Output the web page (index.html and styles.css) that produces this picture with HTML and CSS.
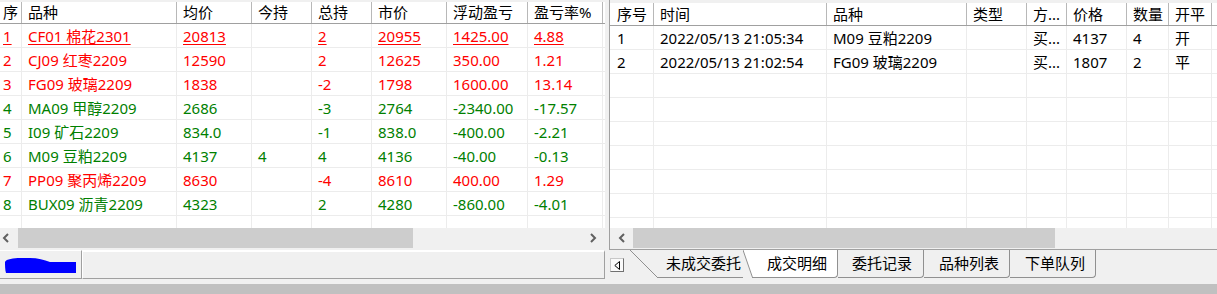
FILE: index.html
```html
<!DOCTYPE html>
<html lang="zh-CN">
<head>
<meta charset="utf-8">
<title>交易</title>
<link rel="stylesheet" href="styles.css">
</head>
<body>
<div class="main">
  <section class="left">
    <div class="grid-wrap left-grid">
      <div class="row head">
        <div class="cell idx">序</div><div class="cell">品种</div><div class="cell">均价</div><div class="cell">今持</div><div class="cell">总持</div><div class="cell">市价</div><div class="cell">浮动盈亏</div><div class="cell">盈亏率%</div>
      </div>
      <div class="row red ul">
        <div class="cell idx">1</div><div class="cell">CF01 棉花2301</div><div class="cell">20813</div><div class="cell"></div><div class="cell">2</div><div class="cell">20955</div><div class="cell">1425.00</div><div class="cell">4.88</div>
      </div>
      <div class="row red">
        <div class="cell idx">2</div><div class="cell">CJ09 红枣2209</div><div class="cell">12590</div><div class="cell"></div><div class="cell">2</div><div class="cell">12625</div><div class="cell">350.00</div><div class="cell">1.21</div>
      </div>
      <div class="row red">
        <div class="cell idx">3</div><div class="cell">FG09 玻璃2209</div><div class="cell">1838</div><div class="cell"></div><div class="cell">-2</div><div class="cell">1798</div><div class="cell">1600.00</div><div class="cell">13.14</div>
      </div>
      <div class="row green">
        <div class="cell idx">4</div><div class="cell">MA09 甲醇2209</div><div class="cell">2686</div><div class="cell"></div><div class="cell">-3</div><div class="cell">2764</div><div class="cell">-2340.00</div><div class="cell">-17.57</div>
      </div>
      <div class="row green">
        <div class="cell idx">5</div><div class="cell">I09 矿石2209</div><div class="cell">834.0</div><div class="cell"></div><div class="cell">-1</div><div class="cell">838.0</div><div class="cell">-400.00</div><div class="cell">-2.21</div>
      </div>
      <div class="row green">
        <div class="cell idx">6</div><div class="cell">M09 豆粕2209</div><div class="cell">4137</div><div class="cell">4</div><div class="cell">4</div><div class="cell">4136</div><div class="cell">-40.00</div><div class="cell">-0.13</div>
      </div>
      <div class="row red">
        <div class="cell idx">7</div><div class="cell">PP09 聚丙烯2209</div><div class="cell">8630</div><div class="cell"></div><div class="cell">-4</div><div class="cell">8610</div><div class="cell">400.00</div><div class="cell">1.29</div>
      </div>
      <div class="row green">
        <div class="cell idx">8</div><div class="cell">BUX09 沥青2209</div><div class="cell">4323</div><div class="cell"></div><div class="cell">2</div><div class="cell">4280</div><div class="cell">-860.00</div><div class="cell">-4.01</div>
      </div>
      <div class="row">
        <div class="cell idx"></div><div class="cell"></div><div class="cell"></div><div class="cell"></div><div class="cell"></div><div class="cell"></div><div class="cell"></div><div class="cell"></div>
      </div>
    </div>
    <div class="hscroll">
      <span class="sb-btn sb-left-a"><svg width="8" height="10" viewBox="0 0 8 10"><polyline points="6,1 2,5 6,9" fill="none" stroke="#606060" stroke-width="2"/></svg></span>
      <span class="thumb" style="width:395px"></span>
      <span class="track"></span>
      <span class="sb-btn sb-right-a"><svg width="8" height="10" viewBox="0 0 8 10"><polyline points="2,1 6,5 2,9" fill="none" stroke="#606060" stroke-width="2"/></svg></span>
    </div>
    <div class="status">
      <div class="st-box st-first">
        <svg class="blob" width="74" height="17" viewBox="0 0 74 17"><path d="M1,5 C2,2 10,1 16,1 L26,1 C34,1 40,3 46,5 L72,5 L72,16 L2,16 C1,13 1,8 1,5 Z" fill="#0000ff"/></svg>
      </div>
      <div class="st-box st-rest"></div>
    </div>
  </section>
  <div class="splitter"></div>
  <section class="right">
    <div class="frame">
      <div class="grid-wrap right-grid">
        <div class="row head">
          <div class="cell idx">序号</div><div class="cell">时间</div><div class="cell">品种</div><div class="cell">类型</div><div class="cell">方...</div><div class="cell">价格</div><div class="cell">数量</div><div class="cell">开平</div>
        </div>
        <div class="row">
          <div class="cell idx">1</div><div class="cell">2022/05/13 21:05:34</div><div class="cell">M09 豆粕2209</div><div class="cell"></div><div class="cell">买...</div><div class="cell">4137</div><div class="cell">4</div><div class="cell">开</div>
        </div>
        <div class="row">
          <div class="cell idx">2</div><div class="cell">2022/05/13 21:02:54</div><div class="cell">FG09 玻璃2209</div><div class="cell"></div><div class="cell">买...</div><div class="cell">1807</div><div class="cell">2</div><div class="cell">平</div>
        </div>
        <div class="row"><div class="cell idx"></div><div class="cell"></div><div class="cell"></div><div class="cell"></div><div class="cell"></div><div class="cell"></div><div class="cell"></div><div class="cell"></div></div>
        <div class="row"><div class="cell idx"></div><div class="cell"></div><div class="cell"></div><div class="cell"></div><div class="cell"></div><div class="cell"></div><div class="cell"></div><div class="cell"></div></div>
        <div class="row"><div class="cell idx"></div><div class="cell"></div><div class="cell"></div><div class="cell"></div><div class="cell"></div><div class="cell"></div><div class="cell"></div><div class="cell"></div></div>
        <div class="row"><div class="cell idx"></div><div class="cell"></div><div class="cell"></div><div class="cell"></div><div class="cell"></div><div class="cell"></div><div class="cell"></div><div class="cell"></div></div>
        <div class="row"><div class="cell idx"></div><div class="cell"></div><div class="cell"></div><div class="cell"></div><div class="cell"></div><div class="cell"></div><div class="cell"></div><div class="cell"></div></div>
        <div class="row"><div class="cell idx"></div><div class="cell"></div><div class="cell"></div><div class="cell"></div><div class="cell"></div><div class="cell"></div><div class="cell"></div><div class="cell"></div></div>
        <div class="row"><div class="cell idx"></div><div class="cell"></div><div class="cell"></div><div class="cell"></div><div class="cell"></div><div class="cell"></div><div class="cell"></div><div class="cell"></div></div>
      </div>
      <div class="hscroll">
        <span class="sb-btn sb-left-b"><svg width="8" height="10" viewBox="0 0 8 10"><polyline points="6,1 2,5 6,9" fill="none" stroke="#606060" stroke-width="2"/></svg></span>
        <span class="thumb" style="width:422px"></span>
        <span class="track"></span>
      </div>
    </div>
    <div class="tabs">
      <span class="tab-nav"><svg width="6" height="9" viewBox="0 0 6 9"><polygon points="5.5,0.5 0.8,4.5 5.5,8.5" fill="none" stroke="#000" stroke-width="1"/></svg></span>
      <svg class="diag" width="28" height="28" viewBox="0 0 28 28"><line x1="0" y1="0" x2="28" y2="28" stroke="#909090" stroke-width="1"/></svg>
      <div class="tab tab-1">未成交委托</div>
      <svg class="diag-active" width="10" height="28" viewBox="0 0 10 28"><polygon points="0,0 10,0 10,27 9,27" fill="#fff"/><line x1="0" y1="0" x2="9.5" y2="27.5" stroke="#909090" stroke-width="1"/><line x1="9" y1="27.5" x2="10" y2="27.5" stroke="#909090" stroke-width="1"/></svg>
      <div class="tab tab-2 active">成交明细</div>
      <div class="tab tab-3">委托记录</div>
      <div class="tab tab-4">品种列表</div>
      <div class="tab tab-5">下单队列</div>
    </div>
  </section>
</div>
<div class="bottom-bar"></div>
</body>
</html>
```
FILE: styles.css
```css
* { box-sizing: border-box; }

body {
  margin: 0;
  width: 1217px;
  height: 294px;
  overflow: hidden;
  background: #f0f0f0;
  font-family: "Noto Sans", "Noto Sans CJK SC", sans-serif;
  font-size: 15px;
  color: #000;
}

.main {
  display: grid;
  grid-template-columns: 605px 4px 608px;
  height: 284px;
}

.left {
  display: flex;
  flex-direction: column;
}

.grid-wrap {
  background: #fff;
  height: 228px;
  overflow: hidden;
}

.row {
  display: grid;
  height: 24px;
  border-bottom: 1px solid #ececec;
}

.left-grid .row { grid-template-columns: 22px 155px 75px 60px 60px 75px 81px 75px; }
.right-grid .row { grid-template-columns: 44px 173px 140px 60px 40px 60px 42px 43px; }

.cell {
  border-right: 1px solid #ececec;
  padding: 2px 0 0 6px;
  line-height: 21px;
  white-space: nowrap;
  overflow: hidden;
}

.left-grid .cell.idx { padding-left: 3px; }
.right-grid .cell.idx { padding-left: 7px; }

.row.head {
  background: #fff;
  border-top: 2px solid #f0f0f0;
  border-bottom: 1px solid #a0a0a0;
}
.row.head .cell {
  border-right: 1px solid #b8b8b8;
  padding-top: 0;
}
.right-grid .row.head {
  height: 26px;
  border-top: 3px solid #f0f0f0;
}
.right-grid .row.head .cell { padding-top: 1px; }

.red { color: #ff0000; }
.green { color: #008000; }
.ul .cell { text-decoration: underline; text-underline-offset: 2px; }

.hscroll {
  display: flex;
  height: 20px;
  background: #f0f0f0;
}
.sb-btn {
  display: flex;
  align-items: center;
}
.sb-left-a { width: 18px; padding-left: 2px; }
.sb-right-a { width: 20px; padding-left: 4px; }
.sb-left-b { width: 23px; padding-left: 8px; }
.thumb { background: #cdcdcd; }
.track { flex: 1; }

.status {
  display: flex;
  height: 29px;
  margin-top: 2px;
}
.st-box {
  border-bottom: 1px solid #a0a0a0;
  border-right: 1px solid #a0a0a0;
  border-top: 1px solid #fff;
}
.st-first {
  width: 82px;
  display: flex;
  align-items: center;
  padding: 2px 0 0 4px;
}
.st-rest {
  flex: 1;
  border-left: 1px solid #fff;
  border-top-width: 2px;
}

.splitter { background: #f0f0f0; }

.right {
  display: flex;
  flex-direction: column;
}
.frame {
  height: 250px;
  border-left: 1px solid #a0a0a0;
  border-bottom: 1px solid #a0a0a0;
  padding-bottom: 1px;
}

.tabs {
  display: flex;
  align-items: flex-start;
  height: 28px;
}
.tab-nav {
  width: 14px;
  height: 14px;
  margin: 8px 6px 0 1px;
  border: 1px solid;
  border-color: #c8c8c8 #707070 #707070 #c8c8c8;
  background: #fafafa;
  display: flex;
  align-items: center;
  justify-content: center;
}
.diag, .diag-active { display: block; flex: none; }

.tab {
  height: 28px;
  line-height: 26px;
  border-bottom: 1px solid #909090;
  border-right: 1px solid #909090;
  border-bottom-right-radius: 4px;
  white-space: nowrap;
  flex: none;
}
.tab-1 { width: 85px; padding-left: 8px; border-right: none; border-bottom-right-radius: 0; }
.tab-2 { width: 85px; padding-left: 14px; }
.tab-3 { width: 86px; padding-left: 14px; }
.tab-4 { width: 86px; padding-left: 15px; }
.tab-5 { width: 86px; padding-left: 15px; }
.tab.active { background: #fff; }

.bottom-bar {
  height: 10px;
  background: #c0c0c0;
}
```
